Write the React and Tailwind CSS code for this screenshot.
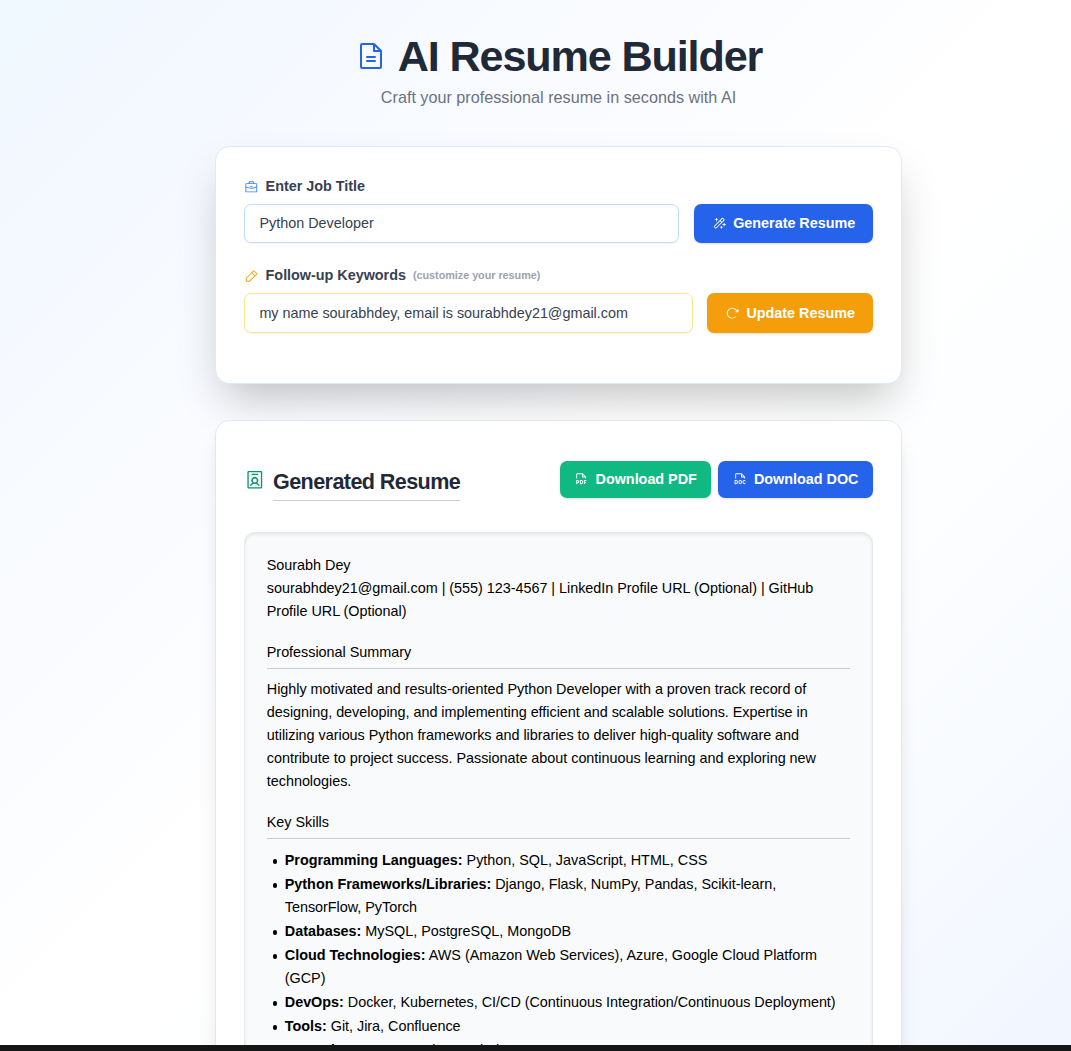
import React from 'react';
import {
  PiFileText, PiBriefcase, PiMagicWand, PiPencilSimple, PiArrowClockwise,
  PiIdentificationBadge, PiFilePdf, PiFileDoc,
} from 'react-icons/pi';

const skills = [
  ['Programming Languages:', 'Python, SQL, JavaScript, HTML, CSS'],
  ['Python Frameworks/Libraries:', 'Django, Flask, NumPy, Pandas, Scikit-learn, TensorFlow, PyTorch'],
  ['Databases:', 'MySQL, PostgreSQL, MongoDB'],
  ['Cloud Technologies:', 'AWS (Amazon Web Services), Azure, Google Cloud Platform (GCP)'],
  ['DevOps:', 'Docker, Kubernetes, CI/CD (Continuous Integration/Continuous Deployment)'],
  ['Tools:', 'Git, Jira, Confluence'],
  ['Operating Systems:', 'Linux, Windows'],
];

function Header() {
  return (
    <header className="flex flex-col items-center">
      <h1 className="flex h-[43px] items-center gap-[11px] text-[43.2px] leading-[43px] font-bold tracking-[-1.15px] text-[#1f2937]">
        <PiFileText className="mb-[2px] size-8 text-[#2563eb]" />
        AI Resume Builder
      </h1>
      <p className="mt-[7px] text-[16.2px] leading-[25px] text-[#6b7280]">Craft your professional resume in seconds with AI</p>
    </header>
  );
}

function BuilderForm() {
  return (
    <section className="mt-9 h-[238px] rounded-[14.4px] border border-[#dbeafe] bg-white px-7 pt-[29px] shadow-[0_22.5px_45px_-10.8px_rgba(0,0,0,0.25)]">
      <label className="flex h-[22px] items-center gap-[7px] font-semibold tracking-[-0.02px] text-[#374151]">
        <PiBriefcase className="size-[14.6px] text-[#3b82f6]" />
        Enter Job Title
      </label>
      <div className="mt-[6px] flex h-[39px] gap-[15px]">
        <input readOnly value="Python Developer" className="min-w-0 flex-1 rounded-[7.2px] border border-[#bfdbfe] bg-white px-[14.4px] text-[#374151] shadow-xs outline-none" />
        <button className="flex w-[179px] items-center justify-center gap-[7px] rounded-[7.2px] bg-[#2563eb] font-semibold tracking-[-0.02px] text-white shadow-sm">
          <PiMagicWand className="size-[14.4px]" />
          Generate Resume
        </button>
      </div>
      <label className="mt-[22px] flex h-[22px] items-center gap-[7px] font-semibold tracking-[-0.02px] text-[#374151]">
        <PiPencilSimple className="size-[14.6px] text-[#f59e0b]" />
        Follow-up Keywords
        <span className="pb-[2px] text-[10.8px] tracking-[-0.02px] text-[#9ca3af]">(customize your resume)</span>
      </label>
      <div className="mt-[6px] flex h-10 gap-[14px]">
        <input readOnly value="my name sourabhdey, email is sourabhdey21@gmail.com" className="min-w-0 flex-1 rounded-[7.2px] border border-[#fde68a] bg-white px-[14.4px] pt-[2px] tracking-[-0.02px] text-[#374151] shadow-xs outline-none" />
        <button className="flex w-[166px] items-center justify-center gap-[7px] rounded-[7.2px] bg-[#f59e0b] pt-px font-semibold tracking-[-0.02px] text-white shadow-sm">
          <PiArrowClockwise className="size-[14.4px]" />
          Update Resume
        </button>
      </div>
    </section>
  );
}

function SectionTitle({ children }) {
  return <h3 className="mt-[18px] h-[28px] border-b border-[#cccccc]">{children}</h3>;
}

function GeneratedResume() {
  return (
    <section className="mt-9 rounded-[14.4px] border border-[#e5e7eb] bg-white px-7 pt-10 pb-7 shadow-[0_18px_22.5px_-4.5px_rgba(0,0,0,0.1),0_7.2px_9px_-5.4px_rgba(0,0,0,0.1)]">
      <div className="flex items-start justify-between">
        <div className="flex items-start gap-[7.4px]">
          <PiIdentificationBadge className="mt-[7.6px] size-[21.6px] text-[#059669]" />
          <h2 className="h-10 border-b border-[#cccccc] pt-[5px] text-[21.6px] leading-[32px] font-bold tracking-[-0.6px] text-[#1f2937]">Generated Resume</h2>
        </div>
        <div className="flex h-[37px] gap-[7px]">
          <button className="flex w-[151px] items-center justify-center gap-[7px] rounded-[7.2px] bg-[#10b981] font-semibold tracking-[-0.02px] text-white shadow-sm">
            <PiFilePdf className="size-[14.4px]" />
            Download PDF
          </button>
          <button className="flex w-[155px] items-center justify-center gap-[7px] rounded-[7.2px] bg-[#2563eb] font-semibold tracking-[-0.02px] text-white shadow-sm">
            <PiFileDoc className="size-[14.4px]" />
            Download DOC
          </button>
        </div>
      </div>
      <article className="mt-[31px] rounded-[10.8px] border border-[#e5e7eb] bg-[#f9fafb] px-[21.8px] pt-[21px] pb-6 leading-[23.04px] tracking-[-0.024px] text-black shadow-[inset_0_1.8px_3.6px_rgba(0,0,0,0.08)]">
        <p>Sourabh Dey<br />sourabhdey21@gmail.com | (555) 123-4567 | LinkedIn Profile URL (Optional) | GitHub Profile URL (Optional)</p>
        <SectionTitle>Professional Summary</SectionTitle>
        <p className="mt-[9px]">Highly motivated and results-oriented Python Developer with a proven track record of designing, developing, and implementing efficient and scalable solutions. Expertise in utilizing various Python frameworks and libraries to deliver high-quality software and contribute to project success. Passionate about continuous learning and exploring new technologies.</p>
        <SectionTitle>Key Skills</SectionTitle>
        <ul className="mt-[10px] pl-[18px]">
          {skills.map(([name, items]) => (
            <li key={name} className="relative mb-[0.9px] before:absolute before:top-[10px] before:left-[-12px] before:size-[4.6px] before:rounded-full before:bg-black"><strong>{name}</strong> {items}</li>
          ))}
        </ul>
      </article>
    </section>
  );
}

export default function App() {
  return (
    <div className="flex h-[1051px] flex-col overflow-hidden bg-[#161616] font-['Liberation_Sans',sans-serif] text-[14.4px]">
      <main className="h-[1045px] overflow-hidden bg-[linear-gradient(135deg,#eff9ff_0%,#f3f8ff_9%,#f9fbff_30%,#ffffff_50%,#fdfeff_68%,#f1f6ff_100%)] pt-[35px] pl-[46px]">
        <div className="mx-auto w-[687px]">
          <Header />
          <BuilderForm />
          <GeneratedResume />
        </div>
      </main>
    </div>
  );
}
